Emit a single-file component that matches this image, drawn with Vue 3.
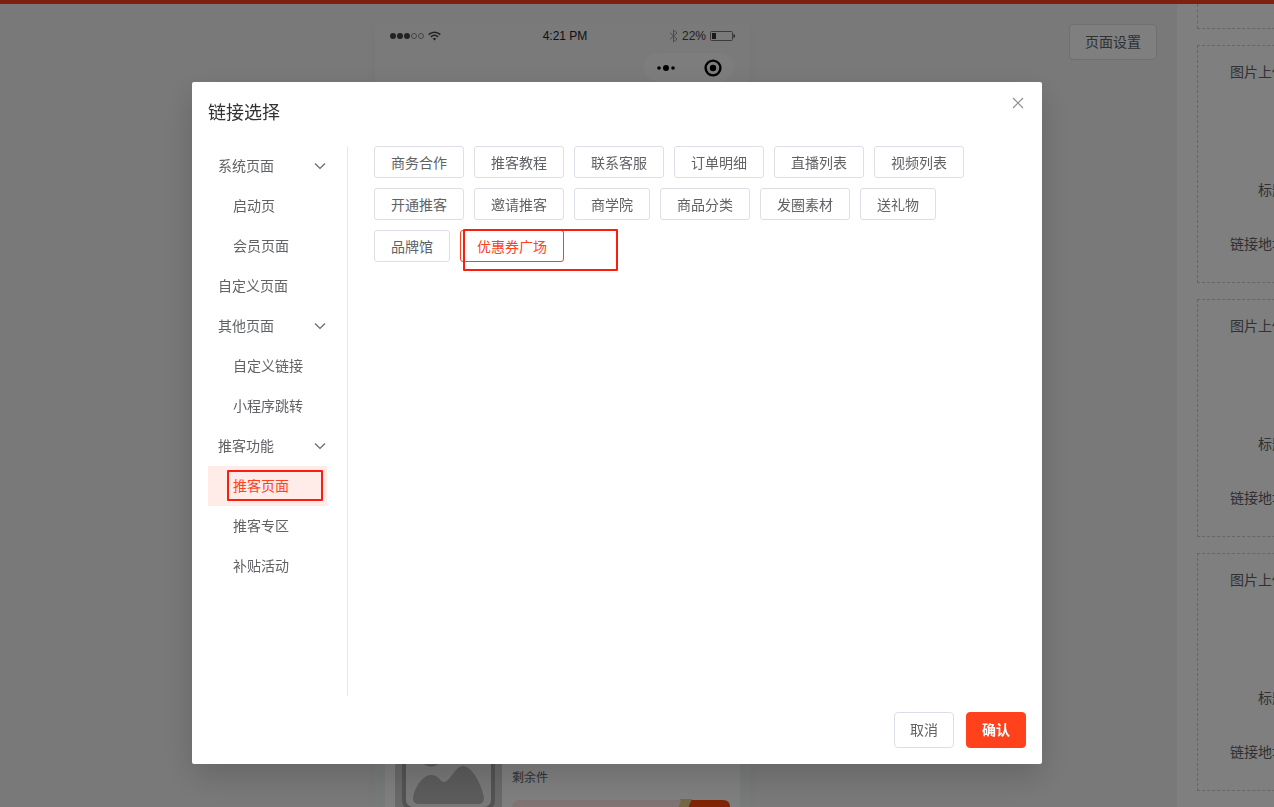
<template>
  <div class="page">
    <div class="top-bar"></div>
    <div class="workspace">
      <main class="canvas">
        <button type="button" class="btn settings-btn">页面设置</button>

        <div class="phone">
          <div class="status-bar">
            <div class="status-left">
              <svg width="36" height="8" viewBox="0 0 36 8">
                <circle cx="3" cy="4" r="3" fill="#444" />
                <circle cx="10" cy="4" r="3" fill="#444" />
                <circle cx="17" cy="4" r="3" fill="#444" />
                <circle cx="24" cy="4" r="2.5" fill="none" stroke="#888" />
                <circle cx="31" cy="4" r="2.5" fill="none" stroke="#888" />
              </svg>
              <svg width="13" height="10" viewBox="0 0 13 10" fill="none" stroke="#444" stroke-width="1.6">
                <path d="M0.7 3.6C4 0.4 9 0.4 12.3 3.6" />
                <path d="M2.9 5.9C5 4 8 4 10.1 5.9" />
                <path d="M4.6 7.6C5.7 6.7 7.3 6.7 8.4 7.6L6.5 9.6Z" fill="#444" stroke="none" />
              </svg>
            </div>
            <span class="status-time">4:21 PM</span>
            <div class="status-right">
              <svg width="9" height="14" viewBox="0 0 9 14" fill="none" stroke="#999" stroke-width="1">
                <path d="M1 3.8L8 10L4.5 13V1L8 4L1 10.2" />
              </svg>
              <span>22%</span>
              <svg width="26" height="12" viewBox="0 0 26 12">
                <rect x="0.5" y="1.5" width="22" height="9" rx="1" fill="none" stroke="#777" />
                <rect x="2" y="3" width="4" height="6" fill="#333" />
                <path d="M23.5 4C25.5 4.6 25.5 7.4 23.5 8Z" fill="#444" />
              </svg>
            </div>
          </div>

          <div class="nav-bar">
            <div class="capsule">
              <svg width="20" height="8" viewBox="0 0 20 8">
                <circle cx="3" cy="4" r="1.8" />
                <circle cx="10" cy="4" r="3" />
                <circle cx="17" cy="4" r="1.8" />
              </svg>
              <svg width="18" height="18" viewBox="0 0 18 18">
                <circle cx="9" cy="9" r="7.4" fill="none" stroke="#000" stroke-width="2.4" />
                <circle cx="9" cy="9" r="3.2" />
              </svg>
            </div>
          </div>

          <div class="goods-list">
            <div class="goods-card">
              <svg class="goods-thumb" width="107" height="107" viewBox="0 0 107 107">
                <rect width="107" height="107" fill="#d2d2d2" />
                <rect x="7" y="7" width="93" height="92" rx="9" fill="#a6a6a6" />
                <rect x="11" y="9" width="85" height="87" rx="7" fill="#f0f0f0" />
                <circle cx="36" cy="46" r="10" fill="#b8b8b8" />
                <path d="M24 93Q18 93 18 87C20 74 29 64 36 64C44 64 45 71 49 71C55 71 60 55 68 55C77 55 87 74 89 87Q89 93 83 93Z" fill="#b8b8b8" />
              </svg>
              <div class="goods-info">
                <div class="goods-stock">剩余件</div>
                <div class="goods-action">
                  <svg width="52" height="30" viewBox="0 0 52 30" overflow="visible">
                    <path d="M12 0H45Q52 0 52 7V30H4Z" fill="#ff4a0a" />
                    <path d="M2 -1H14L8 12V30H0V8L3 1Z" fill="#e8cf8a" />
                  </svg>
                </div>
              </div>
            </div>
          </div>
        </div>
      </main>

      <aside class="panel">
        <div class="form-card form-card-tail"></div>
        <div v-for="n in 3" :key="n" class="form-card">
          <div class="form-row upload-row">图片上传</div>
          <div class="form-row title-row">标题</div>
          <div class="form-row">链接地址</div>
        </div>
      </aside>
    </div>

    <div v-if="visible" class="modal-overlay">
      <div class="modal-content" role="dialog" aria-labelledby="modal-title">
        <button type="button" class="close-btn" aria-label="关闭" @click="close">
          <svg width="12" height="12" viewBox="0 0 12 12" fill="none" stroke="#8a8d93" stroke-width="1.1">
            <path d="M1 1L11 11M11 1L1 11" />
          </svg>
        </button>
        <h2 id="modal-title" class="modal-title">链接选择</h2>

        <div class="modal-body">
          <nav class="menu">
            <template v-for="group in menu" :key="group.name">
              <button type="button" class="menu-item" @click="toggle(group)">
                <span>{{ group.name }}</span>
                <svg v-if="group.children" class="arrow" :class="{ closed: !group.open }" width="12" height="8" viewBox="0 0 12 8" fill="none" stroke="#606266" stroke-width="1.1">
                  <path d="M1 1.5L6 6.5L11 1.5" />
                </svg>
              </button>
              <template v-if="group.open">
                <button
                  v-for="child in group.children"
                  :key="child"
                  type="button"
                  class="menu-item menu-child"
                  :class="{ active: child === activeMenu }"
                  @click="activeMenu = child"
                >
                  {{ child }}
                  <span v-if="child === '推客页面'" class="mark menu-mark"></span>
                </button>
              </template>
            </template>
          </nav>

          <div class="links">
            <button
              v-for="link in links"
              :key="link"
              type="button"
              class="link-btn"
              :class="{ active: link === activeLink }"
              @click="activeLink = link"
            >
              {{ link }}
              <span v-if="link === '优惠券广场'" class="mark link-mark"></span>
            </button>
          </div>
        </div>

        <div class="modal-footer">
          <button type="button" class="btn" @click="close">取消</button>
          <button type="button" class="btn submit-btn" @click="close">确认</button>
        </div>
      </div>
    </div>
  </div>
</template>

<script setup>
import { ref } from 'vue'

const visible = ref(true)
const activeMenu = ref('推客页面')
const activeLink = ref('优惠券广场')

const menu = ref([
  { name: '系统页面', open: true, children: ['启动页', '会员页面'] },
  { name: '自定义页面' },
  { name: '其他页面', open: true, children: ['自定义链接', '小程序跳转'] },
  { name: '推客功能', open: true, children: ['推客页面', '推客专区', '补贴活动'] }
])

const links = [
  '商务合作', '推客教程', '联系客服', '订单明细', '直播列表', '视频列表',
  '开通推客', '邀请推客', '商学院', '商品分类', '发圈素材', '送礼物',
  '品牌馆', '优惠券广场'
]

const toggle = (group) => {
  if (group.children) {
    group.open = !group.open
  }
}

const close = () => {
  visible.value = false
}
</script>

<style>
body {
  margin: 0;
}
</style>

<style scoped>
.page {
  display: flex;
  flex-direction: column;
  height: 100vh;
  overflow: hidden;
  font-family: 'Liberation Sans', 'Noto Sans CJK SC', sans-serif;
  font-size: 14px;
  color: #606266;
}

.page * {
  box-sizing: border-box;
}

button {
  font-family: inherit;
  font-size: 14px;
  color: inherit;
  cursor: pointer;
}

svg {
  display: block;
  flex-shrink: 0;
}

.top-bar {
  flex: 0 0 4px;
  background: #ff411c;
}

.workspace {
  flex: 1;
  display: flex;
  min-height: 0;
}

.canvas {
  position: relative;
  flex: 1;
  display: flex;
  justify-content: center;
  padding: 20px 52px 0 0;
  background: #f2f2f2;
  overflow: hidden;
}

.btn {
  height: 36px;
  padding: 0 15px;
  line-height: 20px;
  background: #fff;
  border: 1px solid #dcdfe6;
  border-radius: 4px;
}

.settings-btn {
  position: absolute;
  top: 20px;
  right: 20px;
}

.phone {
  width: 375px;
  background: #f4f4f4;
  box-shadow: 0 6px 12px rgba(0, 0, 0, 0.03);
}

.status-bar {
  display: grid;
  grid-template-columns: 1fr auto 1fr;
  align-items: center;
  height: 24px;
  padding: 0 14px 0 15px;
  font-size: 12px;
  color: #444;
}

.status-left,
.status-right {
  display: flex;
  align-items: center;
  gap: 2px;
}

.status-right {
  justify-content: flex-end;
  gap: 4px;
}

.status-time {
  padding-left: 4px;
  color: #222;
}

.nav-bar {
  display: flex;
  justify-content: flex-end;
  padding: 5px 16px 0 0;
}

.capsule {
  display: flex;
  align-items: center;
  justify-content: space-between;
  width: 90px;
  height: 29px;
  padding: 0 12px;
  background: #fafafa;
  border-radius: 15px;
}

.goods-list {
  margin-top: 619px;
  padding: 0 10px;
  background: #f0f5f5;
}

.goods-card {
  display: flex;
  align-items: flex-start;
  gap: 10px;
  padding: 10px;
  background: #fff;
}

.goods-info {
  flex: 1;
  padding-top: 56px;
}

.goods-stock {
  margin-bottom: 11px;
  font-size: 12px;
  line-height: 22px;
}

.goods-action {
  display: flex;
  justify-content: flex-end;
  background: #ffe9e6;
  border-radius: 7px;
}

.panel {
  flex: 0 0 97px;
  display: flex;
  flex-direction: column;
  gap: 16px;
  padding-left: 20px;
  background: #fff;
  overflow: hidden;
}

.form-card {
  flex-shrink: 0;
  width: 400px;
  padding: 10px 0 22px;
  border: 1px dashed #ccc;
}

.form-card-tail {
  height: 25px;
  padding: 0;
  border-top: 0;
}

.form-row {
  width: 88px;
  line-height: 32px;
  text-align: right;
  white-space: nowrap;
}

.upload-row {
  height: 118px;
}

.title-row {
  height: 54px;
}

.modal-overlay {
  position: fixed;
  top: 0;
  left: 0;
  right: 0;
  bottom: 0;
  display: flex;
  justify-content: center;
  align-items: flex-start;
  padding: 82px 40px 0 0;
  background-color: rgba(0, 0, 0, 0.5);
}

.modal-content {
  position: relative;
  width: 100%;
  max-width: 850px;
  padding: 16px;
  background: #fff;
  border-radius: 2px;
  box-shadow: 0 12px 32px rgba(0, 0, 0, 0.16);
}

.close-btn {
  position: absolute;
  top: 11px;
  right: 14px;
  padding: 4px;
  background: none;
  border: 0;
}

.modal-title {
  margin: 0 0 18px;
  font-size: 18px;
  font-weight: 400;
  line-height: 30px;
  color: #303133;
}

.modal-body {
  display: flex;
  min-height: 550px;
}

.menu {
  flex: 0 0 140px;
  padding-right: 20px;
  border-right: 1px solid #e4e7ed;
}

.menu-item {
  position: relative;
  display: flex;
  align-items: center;
  justify-content: space-between;
  width: 100%;
  height: 40px;
  padding: 0 1px 0 10px;
  line-height: 20px;
  background: none;
  border: 0;
}

.menu-child {
  padding-left: 25px;
}

.menu-item.active {
  background: #ffebe8;
  color: #ff411c;
}

.arrow.closed {
  transform: rotate(-90deg);
}

.links {
  flex: 1;
  display: flex;
  flex-wrap: wrap;
  align-content: flex-start;
  gap: 10px;
  padding: 0 10px 0 26px;
}

.link-btn {
  position: relative;
  height: 32px;
  padding: 0 16px;
  background: #fff;
  border: 1px solid #dcdfe6;
  border-radius: 3px;
}

.link-btn.active {
  border-color: #ff411c;
  color: #ff411c;
}

.mark {
  position: absolute;
  border: 2px solid #fa1e10;
  border-radius: 1px;
  pointer-events: none;
}

.menu-mark {
  top: 4px;
  left: 19px;
  width: 96px;
  height: 31px;
}

.link-mark {
  top: -2px;
  left: 2px;
  width: 155px;
  height: 42px;
}

.modal-footer {
  display: flex;
  justify-content: flex-end;
  gap: 12px;
  margin-top: 16px;
}

.submit-btn {
  background: #ff411c;
  border-color: #ff411c;
  color: #fff;
  font-weight: 700;
}
</style>
